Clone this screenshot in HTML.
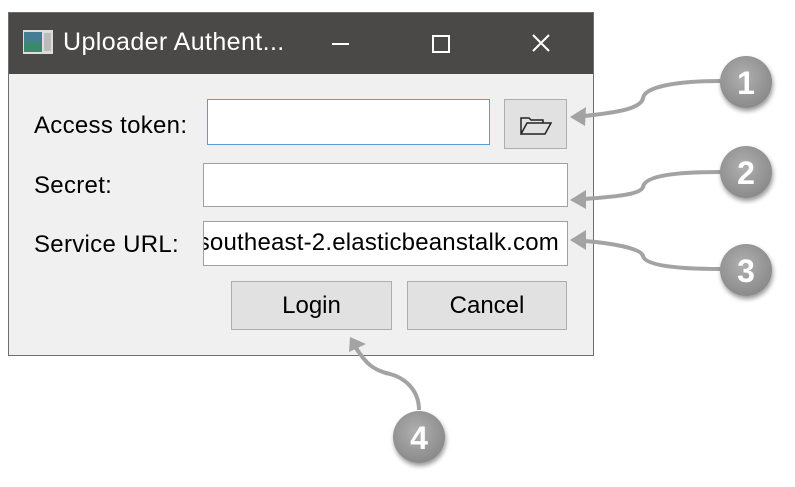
<!DOCTYPE html>
<html><head><style>
body{margin:0;width:795px;height:487px;background:#fff;position:relative;overflow:hidden;font-family:"Liberation Sans",sans-serif;}
.win{position:absolute;left:8px;top:12px;width:584px;height:342px;border:1px solid #6e6e6e;background:#f0f0f0;}
.tb{position:absolute;left:0;top:0;width:584px;height:61px;background:#4b4947;color:#fff;}
.ab{position:absolute;font-size:24px;color:#000;letter-spacing:0.3px;}
.in{position:absolute;background:#fff;border:1px solid #a0a0a0;box-sizing:border-box;}
.btn{position:absolute;background:#e1e1e1;border:1px solid #adadad;box-sizing:border-box;font-size:24px;text-align:center;}
</style></head><body>
<div class="win">
 <div class="tb">
  <svg style="position:absolute;left:14px;top:17px" width="30" height="24"><rect x="0" y="0" width="30" height="24" fill="#ddd"/><rect x="1" y="2" width="18" height="20" fill="#3a8a6a"/><rect x="1" y="2" width="18" height="10" fill="#4a78a8" opacity=".7"/><rect x="21" y="3" width="7" height="18" fill="#bbb"/></svg>
  <div style="position:absolute;left:54px;top:15px;font-size:25px;letter-spacing:0.4px">Uploader Authent...</div>
  <div style="position:absolute;left:323px;top:30px;width:17px;height:2px;background:#fff"></div>
  <div style="position:absolute;left:423px;top:22px;width:14px;height:14px;border:2px solid #fff"></div>
  <svg style="position:absolute;left:522px;top:20px" width="20" height="20"><path d="M2 2L18 18M18 2L2 18" stroke="#fff" stroke-width="2"/></svg>
 </div>
</div>
<div class="ab" style="left:34px;top:112px">Access token:</div>
<div class="ab" style="left:34px;top:172px">Secret:</div>
<div class="ab" style="left:34px;top:231px">Service URL:</div>
<div class="in" style="left:207px;top:99px;width:283px;height:46px;border-color:#5a9bd8"></div>
<div class="btn" style="left:504px;top:99px;width:63px;height:50px;">
 <svg style="position:absolute;left:15px;top:15px" width="32" height="20"><path d="M1 19V3H9L11 5H23V8M1 19L7 8H31L25 19Z" fill="none" stroke="#222" stroke-width="1.5"/></svg>
</div>
<div class="in" style="left:203px;top:163px;width:365px;height:44px"></div>
<div class="in" style="left:203px;top:221px;width:365px;height:45px;overflow:hidden;font-size:24px;line-height:42px;white-space:nowrap;letter-spacing:0.2px"><span style="position:absolute;right:8px">southeast-2.elasticbeanstalk.com</span></div>
<div class="btn" style="left:231px;top:281px;width:161px;height:49px;line-height:47px">Login</div>
<div class="btn" style="left:407px;top:281px;width:160px;height:49px;line-height:47px">Cancel</div>
<svg style="position:absolute;left:0;top:0" width="795" height="487">
<defs><radialGradient id="g" cx="45%" cy="40%" r="60%"><stop offset="0" stop-color="#b0b0b0"/><stop offset="1" stop-color="#8a8a8a"/></radialGradient>
<filter id="s"><feDropShadow dx="1" dy="3" stdDeviation="2.5" flood-opacity=".4"/></filter></defs>
<g fill="none" stroke="#a3a3a3" stroke-width="4">
<path d="M720 81C680 81 645 86 643 98C641 110 610 113 585 116"/>
<path d="M720 172C680 172 645 175 643 187C641 195 610 197 585 199"/>
<path d="M720 269C680 269 645 266 643 256C641 248 610 243 585 241"/>
<path d="M419 410C419 390 405 378 390 374C372 370 365 362 356 348"/>
</g>
<g fill="#a3a3a3">
<path d="M570 117L586 107L585 126Z"/><path d="M570 200L586 190L586 209Z"/><path d="M570 240L586 230L586 250Z"/><path d="M350 337L366 344L349 352Z"/>
</g>
<g filter="url(#s)" fill="url(#g)">
<circle cx="746" cy="82" r="26"/><circle cx="746" cy="172" r="26"/><circle cx="746" cy="270" r="26"/><circle cx="419" cy="437" r="26"/>
</g>
<g fill="#fff" font-family="Liberation Sans" font-weight="bold" font-size="32" text-anchor="middle">
<text x="746" y="94">1</text><text x="746" y="184">2</text><text x="746" y="282">3</text><text x="419" y="449">4</text>
</g>
</svg>
</body></html>
